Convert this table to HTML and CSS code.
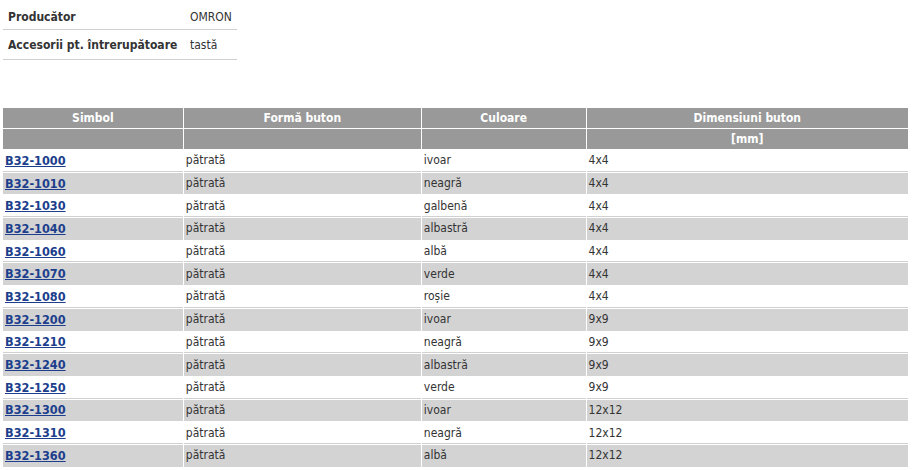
FILE: index.html
```html
<!DOCTYPE html>
<html>
<head>
<meta charset="utf-8">
<link rel="stylesheet" href="styles.css">
</head>
<body>
<table class="props">
  <tr class="first"><th>Producător</th><td>OMRON</td></tr>
  <tr><th>Accesorii pt. întrerupătoare</th><td>tastă</td></tr>
</table>

<table class="grid">
  <thead>
    <tr class="h1"><th class="c1">Simbol</th><th class="c2">Formă buton</th><th class="c3">Culoare</th><th class="c4">Dimensiuni buton</th></tr>
    <tr class="h2"><th></th><th></th><th></th><th>[mm]</th></tr>
  </thead>
  <tbody>
    <tr><td><a href="#">B32-1000</a></td><td>pătrată</td><td>ivoar</td><td>4x4</td></tr>
    <tr class="alt"><td><a href="#">B32-1010</a></td><td>pătrată</td><td>neagră</td><td>4x4</td></tr>
    <tr><td><a href="#">B32-1030</a></td><td>pătrată</td><td>galbenă</td><td>4x4</td></tr>
    <tr class="alt"><td><a href="#">B32-1040</a></td><td>pătrată</td><td>albastră</td><td>4x4</td></tr>
    <tr><td><a href="#">B32-1060</a></td><td>pătrată</td><td>albă</td><td>4x4</td></tr>
    <tr class="alt"><td><a href="#">B32-1070</a></td><td>pătrată</td><td>verde</td><td>4x4</td></tr>
    <tr><td><a href="#">B32-1080</a></td><td>pătrată</td><td>roșie</td><td>4x4</td></tr>
    <tr class="alt"><td><a href="#">B32-1200</a></td><td>pătrată</td><td>ivoar</td><td>9x9</td></tr>
    <tr><td><a href="#">B32-1210</a></td><td>pătrată</td><td>neagră</td><td>9x9</td></tr>
    <tr class="alt"><td><a href="#">B32-1240</a></td><td>pătrată</td><td>albastră</td><td>9x9</td></tr>
    <tr><td><a href="#">B32-1250</a></td><td>pătrată</td><td>verde</td><td>9x9</td></tr>
    <tr class="alt"><td><a href="#">B32-1300</a></td><td>pătrată</td><td>ivoar</td><td>12x12</td></tr>
    <tr><td><a href="#">B32-1310</a></td><td>pătrată</td><td>neagră</td><td>12x12</td></tr>
    <tr class="alt"><td><a href="#">B32-1360</a></td><td>pătrată</td><td>albă</td><td>12x12</td></tr>
  </tbody>
</table>
</body>
</html>
```
FILE: styles.css
```css
html, body {
  margin: 0;
  padding: 0;
  background: #fff;
}
body {
  padding: 0 0 0 3px;
  font-family: "DejaVu Sans Condensed", "DejaVu Sans", sans-serif;
  font-size: 12px;
  color: #333;
}
.props {
  border-collapse: collapse;
  margin-bottom: 47px;
}
.props th, .props td {
  height: 29px;
  padding: 0 5px;
  border-bottom: 1px solid #d0d0d0;
  text-align: left;
  vertical-align: middle;
}
.props tr.first th, .props tr.first td {
  height: 24px;
  padding-top: 5px;
}
.props th {
  font-weight: bold;
  color: #333;
  width: 170px;
  padding-right: 7px;
}
.props td {
  width: 40px;
  padding-left: 5px;
}
.grid {
  width: 907px;
  margin-left: -1px;
  border-collapse: separate;
  border-spacing: 1px;
}
.grid th {
  background: #999;
  color: #fff;
  font-weight: bold;
  height: 20px;
  padding: 0;
  text-align: center;
  vertical-align: middle;
}
.c1 { width: 179px; }
.c2 { width: 236px; }
.c3 { width: 163px; }
.c4 { width: 320px; }
.grid td {
  height: 20.7px;
  padding: 0 2px;
  border-bottom: 1px solid #d0d0d0;
  vertical-align: middle;
  text-align: left;
}
.grid tr.alt td {
  background: #d3d3d3;
  border-bottom-color: #d3d3d3;
}
.grid a {
  color: #1c3e8c;
  font-weight: bold;
  font-size: 12.6px;
}
```
